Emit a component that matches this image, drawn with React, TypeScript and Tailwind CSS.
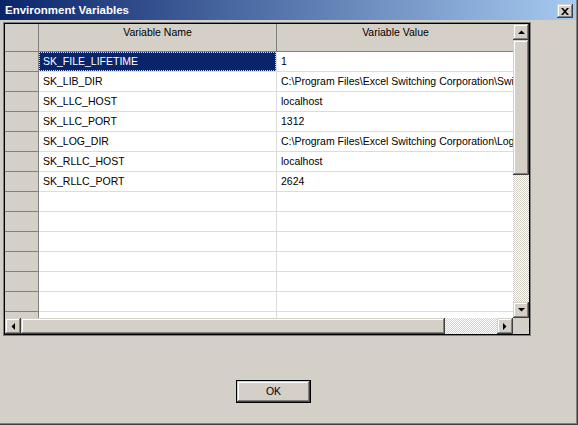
import React from "react";

const rows: [string, string][] = [
  ["SK_FILE_LIFETIME", "1"],
  ["SK_LIB_DIR", "C:\\Program Files\\Excel Switching Corporation\\Switchkit\\lib"],
  ["SK_LLC_HOST", "localhost"],
  ["SK_LLC_PORT", "1312"],
  ["SK_LOG_DIR", "C:\\Program Files\\Excel Switching Corporation\\Logs"],
  ["SK_RLLC_HOST", "localhost"],
  ["SK_RLLC_PORT", "2624"],
  ["", ""],
  ["", ""],
  ["", ""],
  ["", ""],
  ["", ""],
  ["", ""],
  ["", ""],
];

const raised =
  "bg-[#d4d0c8] shadow-[inset_-1px_-1px_#404040,inset_1px_1px_#d4d0c8,inset_-2px_-2px_#808080,inset_2px_2px_#ffffff]";

function Arrow({ dir }: { dir: "up" | "down" | "left" | "right" }) {
  const pts: Record<string, string> = {
    up: "0,4 7,4 3.5,0.5",
    down: "0,0 7,0 3.5,3.5",
    left: "4,0 4,7 0.5,3.5",
    right: "0,0 0,7 3.5,3.5",
  };
  const vertical = dir === "up" || dir === "down";
  return (
    <svg width={vertical ? 7 : 4} height={vertical ? 4 : 7} viewBox={vertical ? "0 0 7 4" : "0 0 4 7"}>
      <polygon points={pts[dir]} fill="#000" />
    </svg>
  );
}

function ScrollBtn({ dir }: { dir: "up" | "down" | "left" | "right" }) {
  return (
    <div className={`w-[16px] h-[16px] shrink-0 flex items-center justify-center ${raised}`}>
      <Arrow dir={dir} />
    </div>
  );
}

const checker =
  "bg-[repeating-conic-gradient(#ffffff_0_25%,#d4d0c8_0_50%)] bg-[length:2px_2px]";

export default function App() {
  return (
    <div className="w-[578px] h-[425px] bg-[#d4d0c8] overflow-hidden font-['Liberation_Sans',Arial,sans-serif] text-[10.5px] text-black">
      <div className="h-full border-r border-b border-[#404040]">
        <div className="h-full flex flex-col border-r border-b border-[#808080]">
          {/* Title bar */}
          <div className="h-[20px] shrink-0 flex items-center pl-[5px] pr-[3px] bg-[linear-gradient(to_right,#0a246a,#a6caf0)]">
            <span className="text-white font-bold text-[11.5px] leading-none mt-[2px]">Environment Variables</span>
            <div className={`ml-auto mt-[2px] w-[16px] h-[14px] flex items-center justify-center ${raised}`}>
              <svg width="8" height="7" viewBox="0 0 8 7">
                <path d="M0 0h2l2 2.3L6 0h2L5 3.5 8 7H6L4 4.7 2 7H0l3-3.5z" fill="#000" />
              </svg>
            </div>
          </div>

          {/* Grid */}
          <div className="ml-[3px] mt-[2px] w-[528px] h-[314px] border border-[#808080]">
            <div className="w-full h-full border border-black flex flex-col">
              <div className="flex h-[294px]">
                <div className="w-[508px] overflow-hidden flex flex-col bg-white">
                  {/* Header */}
                  <div className="flex h-[28px] shrink-0 bg-[#d4d0c8]">
                    <div className="w-[34px] shrink-0 border-r border-b border-[#808080]" />
                    <div className="w-[238px] shrink-0 border-r border-b border-[#808080] text-center pt-[1px] whitespace-nowrap">
                      Variable Name
                    </div>
                    <div className="w-[237px] shrink-0 border-b border-[#808080] text-center pt-[1px] whitespace-nowrap">
                      Variable Value
                    </div>
                  </div>
                  {rows.map(([name, value], i) => (
                    <div key={i} className="flex h-[20px] shrink-0">
                      <div className="w-[34px] shrink-0 bg-[#d4d0c8] border-r border-b border-[#808080]" />
                      {i === 0 ? (
                        <div className="w-[238px] shrink-0 border-r border-b border-[#dcdcdc]">
                          <div className="w-full h-full bg-[#0a246a] text-white border border-dotted border-[#f0e0a0] flex items-center pl-[3px] pt-[1px] whitespace-nowrap">
                            {name}
                          </div>
                        </div>
                      ) : (
                        <div className="w-[238px] shrink-0 border-r border-b border-[#dcdcdc] flex items-center pl-[4px] pt-[1px] whitespace-nowrap">
                          {name}
                        </div>
                      )}
                      <div className="w-[300px] shrink-0 border-b border-[#dcdcdc] flex items-center pl-[4px] pt-[1px] whitespace-nowrap overflow-hidden">
                        {value}
                      </div>
                    </div>
                  ))}
                </div>
                {/* Vertical scrollbar */}
                <div className="w-[16px] flex flex-col">
                  <ScrollBtn dir="up" />
                  <div className={`h-[135px] shrink-0 ${raised}`} />
                  <div className={`flex-1 ${checker}`} />
                  <ScrollBtn dir="down" />
                </div>
              </div>
              {/* Horizontal scrollbar */}
              <div className="flex h-[16px]">
                <ScrollBtn dir="left" />
                <div className={`w-[424px] shrink-0 ${raised}`} />
                <div className={`flex-1 ${checker}`} />
                <ScrollBtn dir="right" />
                <div className="w-[16px] shrink-0 bg-[#d4d0c8]" />
              </div>
            </div>
          </div>

          {/* OK button */}
          <div className="ml-[236px] mt-[44px] w-[75px] h-[23px] border border-black">
            <div className={`w-full h-full flex items-center justify-center ${raised}`}>
              OK
            </div>
          </div>
        </div>
      </div>
    </div>
  );
}
